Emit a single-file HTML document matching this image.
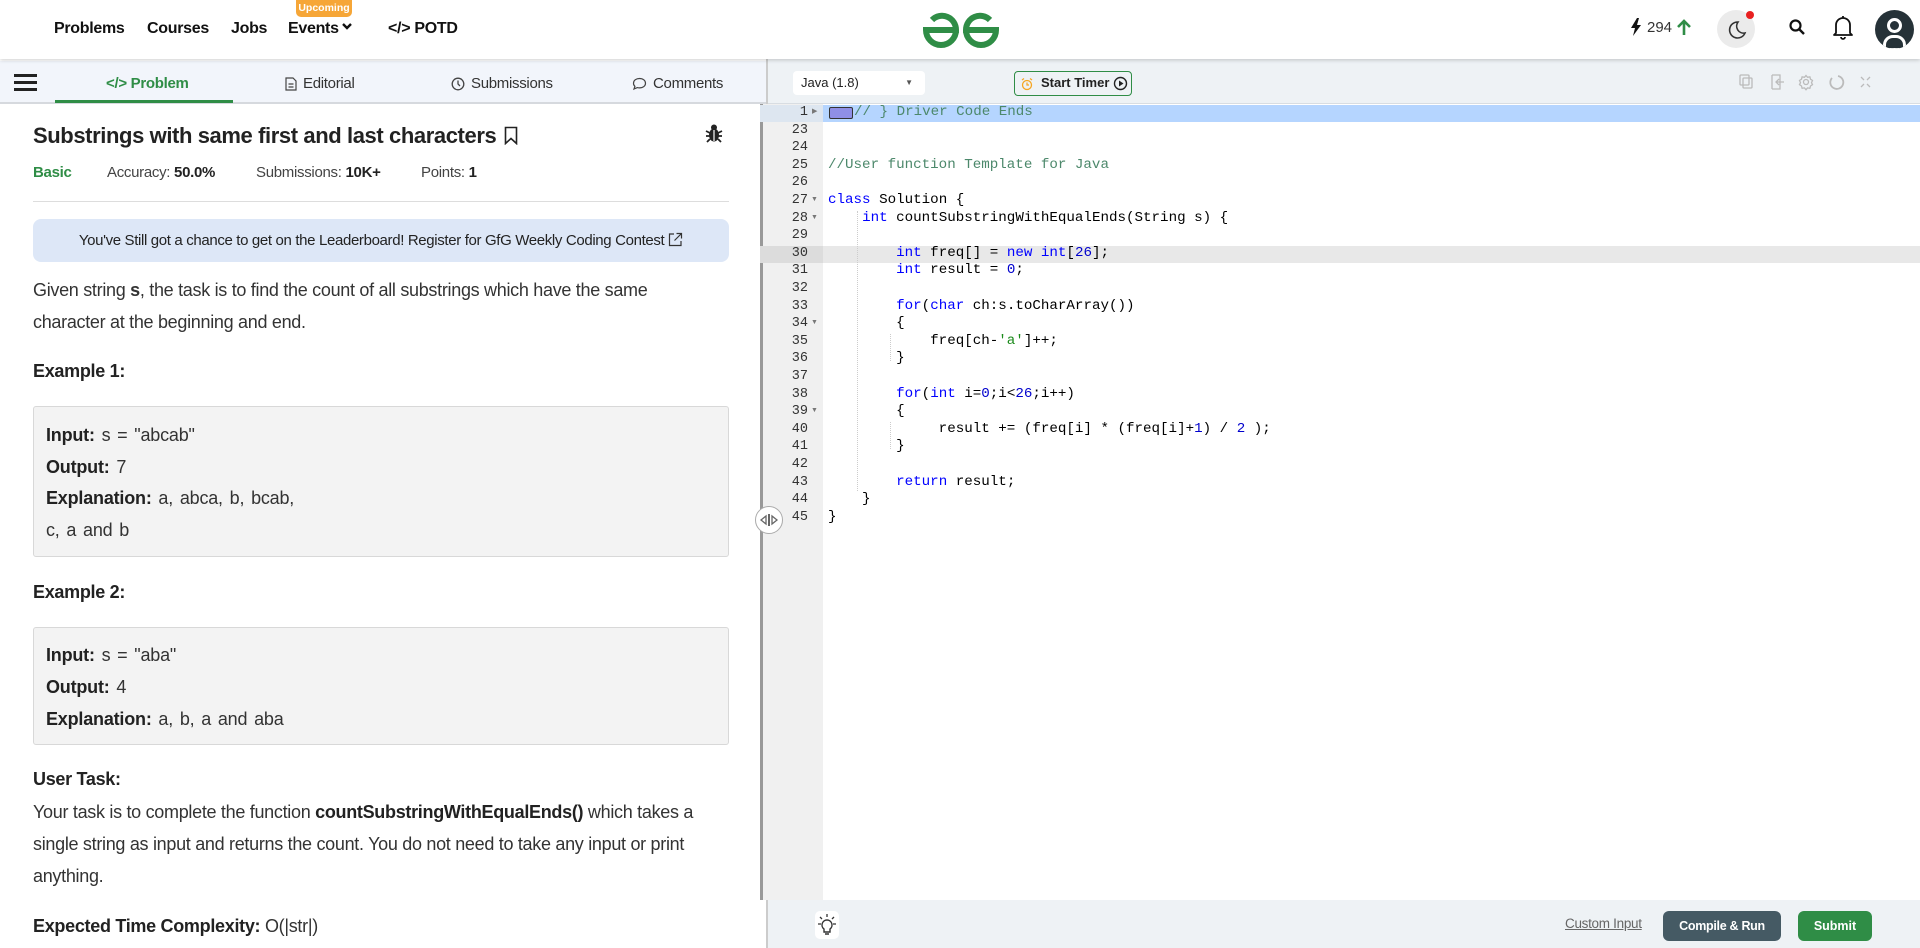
<!DOCTYPE html>
<html><head><meta charset="utf-8">
<style>
*{box-sizing:border-box;margin:0;padding:0}
body{width:1920px;height:948px;overflow:hidden;background:#fff;font-family:"Liberation Sans",sans-serif;color:#222;position:relative}
.abs{position:absolute}
#hdr{left:0;top:0;width:1920px;height:59px;background:#fff;box-shadow:0 1px 4px rgba(0,0,0,.2);z-index:5}
.nav{top:20px;font-size:16px;font-weight:700;color:#111;letter-spacing:-0.3px}
#left{left:0;top:59px;width:768px;height:889px;background:#fff;overflow:hidden}
#tabs{left:0;top:61px;width:766px;height:43px;background:#f2f5fb;border-bottom:2px solid #d6d9de}
.tab{top:14px;font-size:15px;color:#333;letter-spacing:-0.3px;display:flex;align-items:center;gap:6px}
.p{font-size:18px;letter-spacing:-0.3px;color:#333}
.box{left:33px;width:696px;background:#f3f3f3;border:1px solid #d8d8d8;border-radius:3px}
.box div{position:absolute;left:12px;font-size:18px;letter-spacing:-0.2px;color:#333;word-spacing:2px}
.box b{color:#222}
#code{left:769px;top:104px;width:1151px;height:796px;background:#fff}
#gut{left:760px;top:104px;width:63px;height:796px;background:#f0f0f0}
.ln{position:absolute;left:760px;width:48px;text-align:right;font-family:"Liberation Mono",monospace;font-size:13.5px;color:#333}
.cl{position:absolute;left:828px;font-family:"Liberation Mono",monospace;font-size:14.2px;color:#000;white-space:pre}
.k{color:#0000ff}.c{color:#4c886b}.n{color:#0000cd}.s{color:#1a8a1a}
</style></head><body>

<div id="hdr" class="abs">
 <div class="abs nav" style="left:54px">Problems</div>
 <div class="abs nav" style="left:147px">Courses</div>
 <div class="abs nav" style="left:231px">Jobs</div>
 <div class="abs nav" style="left:288px">Events</div>
 <svg class="abs" style="left:341px;top:22px" width="12" height="10" viewBox="0 0 12 10"><path d="M2 2l4 4 4-4" stroke="#111" stroke-width="2.4" fill="none"/></svg>
 <div class="abs" style="left:296px;top:0;width:56px;height:17px;background:#f6a637;border-radius:0 0 5px 5px;color:#fff;font-size:10.5px;font-weight:700;text-align:center;line-height:17px">Upcoming</div>
 <div class="abs nav" style="left:388px">&lt;/&gt; POTD</div>
 <svg class="abs" style="left:922px;top:10px" width="78" height="40" viewBox="0 0 78 40">
  <g fill="none" stroke="#2f8d46" stroke-width="6">
   <path d="M10 10 A14 14 0 0 1 34 20 L4 20 A14 14 0 0 0 34 20"/>
   <path d="M68 10 A14 14 0 0 0 44 20 L74 20 A14 14 0 0 1 44 20"/>
  </g>
 </svg>
 <svg class="abs" style="left:1630px;top:18px" width="12" height="18" viewBox="0 0 12 18"><path d="M7 0L1 10h4l-2 8 8-11H7l2-7z" fill="#111"/></svg>
 <div class="abs" style="left:1647px;top:19px;font-size:15px;color:#333">294</div>
 <svg class="abs" style="left:1677px;top:18px" width="14" height="18" viewBox="0 0 14 18"><path d="M7 17V3M1 9l6-6 6 6" stroke="#2f8d46" stroke-width="2.6" fill="none"/></svg>
 <div class="abs" style="left:1717px;top:10px;width:38px;height:38px;border-radius:50%;background:#ebebeb"></div>
 <svg class="abs" style="left:1727px;top:20px" width="20" height="20" viewBox="0 0 20 20"><path d="M11 2a8 8 0 1 0 7 11A7 7 0 0 1 11 2z" stroke="#333" stroke-width="1.6" fill="none"/></svg>
 <div class="abs" style="left:1746px;top:11px;width:8px;height:8px;border-radius:50%;background:#e82020"></div>
 <svg class="abs" style="left:1788px;top:18px" width="18" height="18" viewBox="0 0 18 18"><circle cx="7.5" cy="7.5" r="5" stroke="#111" stroke-width="2.2" fill="none"/><path d="M11 11l5 5" stroke="#111" stroke-width="2.4"/></svg>
 <svg class="abs" style="left:1832px;top:14px" width="22" height="26" viewBox="0 0 22 26"><path d="M4 19V11a7 7 0 0 1 14 0v8l2 2H2z M9 23a2 2 0 0 0 4 0 M11 2v2" stroke="#111" stroke-width="1.8" fill="none" stroke-linejoin="round"/></svg>
 <div class="abs" style="left:1875px;top:10px;width:39px;height:39px;border-radius:50%;background:#263238;overflow:hidden">
  <div class="abs" style="left:12px;top:8px;width:15px;height:15px;border-radius:50%;border:3px solid #fff"></div>
  <div class="abs" style="left:8px;top:25px;width:23px;height:16px;border-radius:10px 10px 0 0;border:3px solid #fff"></div>
 </div>
</div>

<div id="left" class="abs"></div>
<div id="tabs" class="abs">
 <div class="abs" style="left:14px;top:13px;width:23px;height:3px;background:#222;box-shadow:0 7px 0 #222,0 14px 0 #222"></div>
 <div class="abs tab" style="left:106px;color:#2f8d46;font-weight:700">&lt;/&gt; Problem</div>
 <div class="abs" style="left:55px;top:39px;width:178px;height:3px;background:#2f8d46"></div>
 <div class="abs tab" style="left:285px"><svg width="12" height="14" viewBox="0 0 12 14"><path d="M1 1h7l3 3v9H1z M3.5 7h5M3.5 10h5" stroke="#444" stroke-width="1.2" fill="none"/></svg>Editorial</div>
 <div class="abs tab" style="left:451px"><svg width="14" height="14" viewBox="0 0 14 14"><circle cx="7" cy="7" r="5.8" stroke="#444" stroke-width="1.3" fill="none"/><path d="M7 3.5V7l2 2" stroke="#444" stroke-width="1.3" fill="none"/></svg>Submissions</div>
 <div class="abs tab" style="left:632px"><svg width="15" height="14" viewBox="0 0 15 14"><path d="M7.5 1.5c3.5 0 6 2 6 4.7s-2.5 4.7-6 4.7c-.8 0-1.5-.1-2.2-.3L2 12l.9-2.7C1.9 8.4 1.5 7.3 1.5 6.2 1.5 3.5 4 1.5 7.5 1.5z" stroke="#444" stroke-width="1.2" fill="none"/></svg>Comments</div>
</div>

<div class="abs" style="left:33px;top:123px;font-size:22px;font-weight:700;color:#222;letter-spacing:-0.4px">Substrings with same first and last characters</div>
<svg class="abs" style="left:504px;top:126px" width="14" height="19" viewBox="0 0 14 19"><path d="M1.5 1.5h11v16l-5.5-5-5.5 5z" stroke="#222" stroke-width="1.6" fill="none"/></svg>
<svg class="abs" style="left:705px;top:123px" width="18" height="20" viewBox="0 0 18 20"><ellipse cx="9" cy="12" rx="5" ry="6.5" fill="#222"/><circle cx="9" cy="4.5" r="3" fill="#222"/><path d="M1 8l4 2M17 8l-4 2M1 13h4M17 13h-4M2 19l3-3M16 19l-3-3" stroke="#222" stroke-width="1.8"/><path d="M9 7v11" stroke="#fff" stroke-width="1.2"/></svg>
<div class="abs" style="left:33px;top:164px;font-size:15px;letter-spacing:-0.3px;color:#444"><b style="color:#2f8d46">Basic</b></div>
<div class="abs" style="left:107px;top:164px;font-size:15px;letter-spacing:-0.3px;color:#444">Accuracy: <b style="color:#222">50.0%</b></div>
<div class="abs" style="left:256px;top:164px;font-size:15px;letter-spacing:-0.3px;color:#444">Submissions: <b style="color:#222">10K+</b></div>
<div class="abs" style="left:421px;top:164px;font-size:15px;letter-spacing:-0.3px;color:#444">Points: <b style="color:#222">1</b></div>
<div class="abs" style="left:33px;top:201px;width:696px;height:1px;background:#ddd"></div>
<div class="abs" style="left:33px;top:219px;width:696px;height:43px;background:#dde7f7;border-radius:8px;text-align:center;line-height:43px;font-size:15px;letter-spacing:-0.35px;color:#222">You've Still got a chance to get on the Leaderboard! Register for GfG Weekly Coding Contest <svg width="15" height="15" viewBox="0 0 15 15" style="vertical-align:-2px"><path d="M6 2H1.5v11.5H13V9M8.5 1.5H13.5V6.5M13.5 1.5L6.5 8.5" stroke="#333" stroke-width="1.2" fill="none"/></svg></div>

<div class="abs p" style="left:33px;top:280px">Given string <b>s</b>, the task is to find the count of all substrings which have the same</div>
<div class="abs p" style="left:33px;top:312px">character at the beginning and end.</div>
<div class="abs p" style="left:33px;top:361px;font-weight:700;color:#222">Example 1:</div>
<div class="abs box" style="top:406px;height:151px">
 <div style="top:18px"><b>Input:</b> s = "abcab"</div>
 <div style="top:50px"><b>Output:</b> 7</div>
 <div style="top:81px"><b>Explanation:</b> a, abca, b, bcab,</div>
 <div style="top:113px">c, a and b</div>
</div>
<div class="abs p" style="left:33px;top:582px;font-weight:700;color:#222">Example 2:</div>
<div class="abs box" style="top:627px;height:118px">
 <div style="top:17px"><b>Input:</b> s = "aba"</div>
 <div style="top:49px"><b>Output:</b> 4</div>
 <div style="top:81px"><b>Explanation:</b> a, b, a and aba</div>
</div>
<div class="abs p" style="left:33px;top:769px;font-weight:700;color:#222">User Task:</div>
<div class="abs p" style="left:33px;top:802px">Your task is to complete the function <b style="color:#222">countSubstringWithEqualEnds()</b> which takes a</div>
<div class="abs p" style="left:33px;top:834px">single string as input and returns the count. You do not need to take any input or print</div>
<div class="abs p" style="left:33px;top:866px">anything.</div>
<div class="abs p" style="left:33px;top:916px"><b style="color:#222">Expected Time Complexity:</b> O(|str|)</div>

<div class="abs" style="left:766px;top:59px;width:2px;height:889px;background:#ccc"></div>
<div class="abs" style="left:762px;top:107px;width:5px;height:542px;background:#8a8a8a;border-radius:2px"></div>

<div class="abs" style="left:768px;top:59px;width:1152px;height:45px;background:#eef2f5;border-bottom:1px solid #d8dde2"></div>
<div class="abs" style="left:793px;top:71px;width:132px;height:24px;background:#fff;border-radius:4px;font-size:13px;line-height:24px;padding-left:8px;color:#222">Java (1.8)<span style="position:absolute;right:12px;font-size:8px;color:#555">▼</span></div>
<div class="abs" style="left:1014px;top:71px;width:118px;height:25px;border:1.3px solid #2f8d46;border-radius:4px;font-size:13px;font-weight:700;line-height:22px;color:#222;padding-left:26px">Start Timer</div>
<svg class="abs" style="left:1020px;top:77px" width="14" height="14" viewBox="0 0 14 14"><circle cx="7" cy="8" r="4.5" stroke="#f5a623" stroke-width="1.3" fill="none"/><path d="M7 5.5V8h2M2 3l2-1.5M12 3l-2-1.5" stroke="#f5a623" stroke-width="1.2" fill="none"/></svg>
<svg class="abs" style="left:1113px;top:76px" width="15" height="15" viewBox="0 0 15 15"><circle cx="7.5" cy="7.5" r="6" stroke="#222" stroke-width="1.4" fill="none"/><path d="M6 4.5v6l4.5-3z" fill="#222"/></svg>
<svg class="abs" style="left:1738px;top:72px" width="140" height="20" viewBox="0 0 140 20" fill="none" stroke="#bbb" stroke-width="1.3">
 <rect x="2" y="3" width="9" height="10" rx="1"/><rect x="5" y="6" width="9" height="10" rx="1"/>
 <path d="M34 3h8v14h-8 M34 3v14 M46 10h-7 M41 7l-3 3 3 3"/>
 <circle cx="68" cy="10" r="2.5"/><path d="M68 3.5l1.5 1.8 2.4-.4.6 2.3 2 1.3-1 2.1 1 2.1-2 1.3-.6 2.3-2.4-.4-1.5 1.8-1.5-1.8-2.4.4-.6-2.3-2-1.3 1-2.1-1-2.1 2-1.3.6-2.3 2.4.4z"/>
 <path d="M100 4a6.5 6.5 0 1 1-6 2" stroke-width="1.8"/>
 <path d="M123 5l3 3M132 5l-3 3M123 15l3-3M132 15l-3-3"/>
</svg>

<div id="code" class="abs"></div>
<div id="gut" class="abs"></div>
<div class="abs" style="left:760px;top:104px;width:3px;height:796px;background:#999"></div>
<div class="abs" style="left:823px;top:105px;width:1097px;height:17px;background:#b5d5ff"></div>
<div class="abs" style="left:760px;top:105px;width:63px;height:17px;background:#dde6f0"></div>
<div class="abs" style="left:769px;top:246px;width:1151px;height:17px;background:#e8e8e8"></div>
<div class="abs" style="left:760px;top:246px;width:63px;height:17px;background:#dcdcdc"></div>
<div class="abs" style="left:829px;top:107px;width:24px;height:12px;border:1px solid #333;border-radius:2px;background:#8f8fe6"></div>
<div class="abs" style="left:857px;top:211px;width:0;height:280px;border-left:1px dotted #ccc"></div>
<div class="abs" style="left:890px;top:334px;width:0;height:27px;border-left:1px dotted #ccc"></div>
<div class="abs" style="left:890px;top:422px;width:0;height:27px;border-left:1px dotted #ccc"></div>

<div id="lines"></div>
<script>
var L=[
["1",'<span style="padding-left:26px" class="c">// } Driver Code Ends</span>'],
["23",""],["24",""],
["25",'<span class="c">//User function Template for Java</span>'],
["26",""],
["27",'<span class="k">class</span> Solution {'],
["28",'    <span class="k">int</span> countSubstringWithEqualEnds(String s) {'],
["29",""],
["30",'        <span class="k">int</span> freq[] = <span class="k">new</span> <span class="k">int</span>[<span class="n">26</span>];'],
["31",'        <span class="k">int</span> result = <span class="n">0</span>;'],
["32",""],
["33",'        <span class="k">for</span>(<span class="k">char</span> ch:s.toCharArray())'],
["34",'        {'],
["35",'            freq[ch-<span class="s">\'a\'</span>]++;'],
["36",'        }'],
["37",""],
["38",'        <span class="k">for</span>(<span class="k">int</span> i=<span class="n">0</span>;i&lt;<span class="n">26</span>;i++)'],
["39",'        {'],
["40",'             result += (freq[i] * (freq[i]+<span class="n">1</span>) / <span class="n">2</span> );'],
["41",'        }'],
["42",""],
["43",'        <span class="k">return</span> result;'],
["44",'    }'],
["45",'}']];
var h="";
for(var i=0;i<L.length;i++){var t=104+i*17.6;
h+='<div class="ln" style="top:'+(t+1)+'px">'+L[i][0]+'</div><div class="cl" style="top:'+t+'px">'+L[i][1]+'</div>';
if(["27","28","34","39"].indexOf(L[i][0])>=0)h+='<div class="abs" style="left:811px;top:'+(t+4)+'px;font-size:7px;color:#777">▼</div>';
if(L[i][0]=="1")h+='<div class="abs" style="left:812px;top:'+(t+3)+'px;font-size:7px;color:#777">▶</div>';}
document.getElementById("lines").innerHTML=h;
</script>

<div class="abs" style="left:755px;top:506px;width:28px;height:28px;border-radius:50%;background:#fff;border:1.5px solid #aaa"></div>
<svg class="abs" style="left:759px;top:512px" width="20" height="16" viewBox="0 0 20 16"><path d="M2 8l5-4v8z M18 8l-5-4v8z" stroke="#666" stroke-width="1.3" fill="none"/><path d="M10 2v12" stroke="#666" stroke-width="2"/></svg>

<div class="abs" style="left:768px;top:900px;width:1152px;height:48px;background:#eef2f5"></div>
<div class="abs" style="left:815px;top:911px;width:24px;height:28px;background:#fff;border-radius:5px"></div>
<svg class="abs" style="left:817px;top:913px" width="20" height="24" viewBox="0 0 20 24"><path d="M10 7a5 5 0 0 0-3 9v3h6v-3a5 5 0 0 0-3-9z M8 21h4" stroke="#333" stroke-width="1.4" fill="none"/><path d="M10 1v3M3 4l2 2M17 4l-2 2M1 11h3M16 11h3" stroke="#333" stroke-width="1.3"/></svg>
<div class="abs" style="left:1565px;top:916px;font-size:13.5px;color:#666;text-decoration:underline;letter-spacing:-0.3px">Custom Input</div>
<div class="abs" style="left:1663px;top:911px;width:118px;height:30px;background:#455a64;border-radius:6px;color:#fff;font-size:12.5px;font-weight:700;text-align:center;line-height:30px;letter-spacing:-0.3px">Compile &amp; Run</div>
<div class="abs" style="left:1798px;top:911px;width:74px;height:30px;background:#2f8d46;border-radius:6px;color:#fff;font-size:12.5px;font-weight:700;text-align:center;line-height:30px">Submit</div>
</body></html>
